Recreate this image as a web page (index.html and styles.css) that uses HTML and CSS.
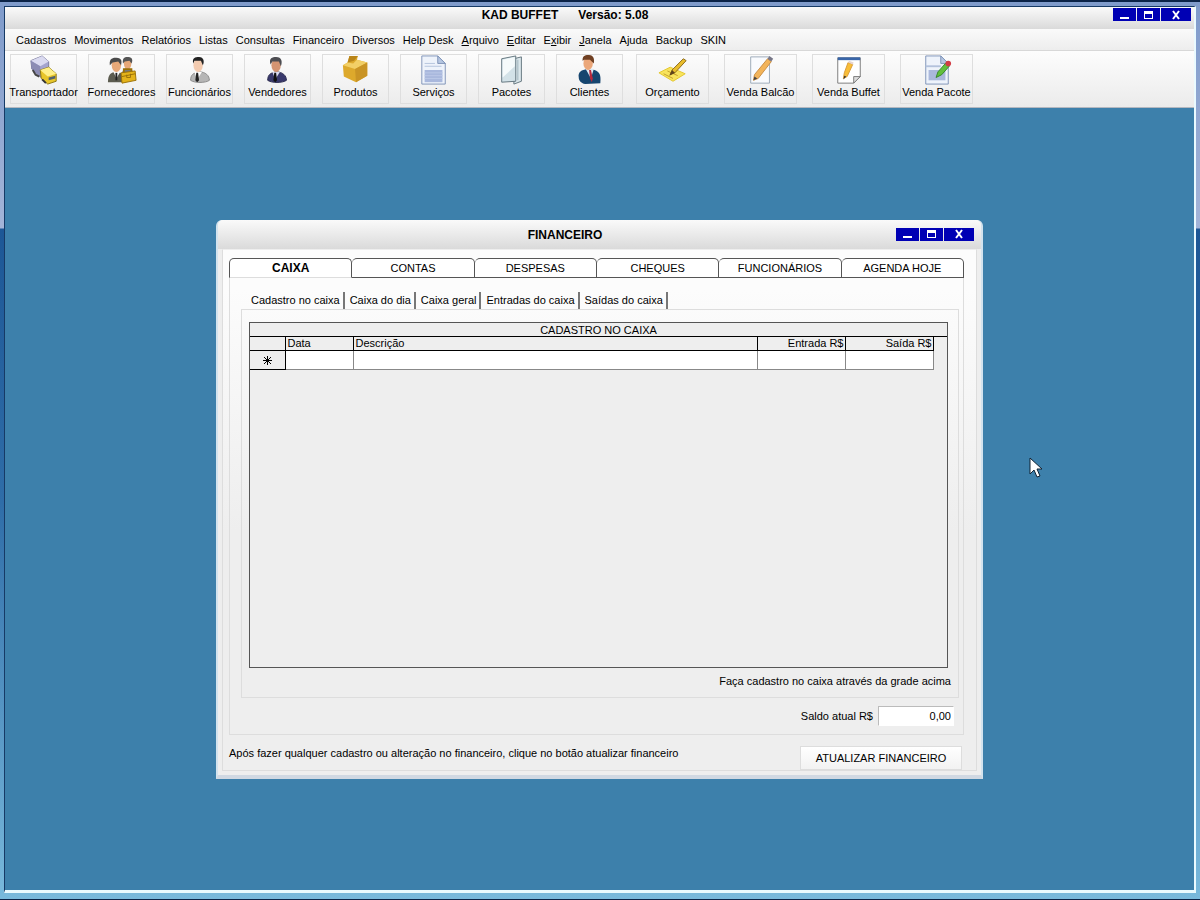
FILE: index.html
```
<!DOCTYPE html>
<html lang="pt-BR">
<head>
    <meta charset="utf-8">
    <title>KAD BUFFET</title>
    <link rel="stylesheet" href="styles.css">
</head>
<body>
    <div class="frame">
        <div class="app">
            <header class="titlebar">
                <h1 class="title"><span>KAD BUFFET</span><span>Versão: 5.08</span></h1>
                <div class="controls">
                    <button type="button" aria-label="Minimizar"><svg width="12" height="12"><path d="M1 9h9" stroke="#fff" stroke-width="2"/></svg></button>
                    <button type="button" aria-label="Maximizar"><svg width="12" height="12"><path d="M1 2h9v8H1z" fill="#fff"/><path d="M2 5h7v4H2z" fill="#0000b4"/></svg></button>
                    <button type="button" class="close" aria-label="Fechar"><svg width="12" height="12"><path d="M3 2l6 8M9 2l-6 8" stroke="#fff" stroke-width="2"/></svg></button>
                </div>
            </header>

            <nav class="menu">
                <a href="#">Cadastros</a>
                <a href="#">Movimentos</a>
                <a href="#">Relatórios</a>
                <a href="#">Listas</a>
                <a href="#">Consultas</a>
                <a href="#">Financeiro</a>
                <a href="#">Diversos</a>
                <a href="#">Help Desk</a>
                <a href="#"><u>A</u>rquivo</a>
                <a href="#"><u>E</u>ditar</a>
                <a href="#">E<u>x</u>ibir</a>
                <a href="#"><u>J</u>anela</a>
                <a href="#">Ajuda</a>
                <a href="#">Backup</a>
                <a href="#">SKIN</a>
            </nav>

            <div class="toolbar">
                <div class="group">
                    <button type="button" class="tool">
                        <svg width="30" height="30" viewBox="0 0 32 32"><path d="M2 6l12-5 7 6v10l-8 7L3 15z" fill="#a4a4ce" stroke="#77779a"/><path d="M2 6l12-5 7 6-9 5z" fill="#dadaf0"/><path d="M2 6l10 6v11L3 15z" fill="#8c8cb4"/><path d="M4 16l3 5 4 2" stroke="#444" stroke-width="2" fill="none"/><path d="M12 16l9-3 8 7v8l-9 3-7-6z" fill="#e8c62a" stroke="#8a7410"/><path d="M12 16l9-3 8 7-9 3z" fill="#fff08a"/><path d="M21 24l7-2v3l-7 2z" fill="#53626b"/><path d="M14 26l4 4" stroke="#333" stroke-width="2"/></svg>
                        Transportador
                    </button>
                    <button type="button" class="tool">
                        <svg width="30" height="30" viewBox="0 0 32 32"><path d="M1 29c0-8 3-11 9-11s8 3 8 11z" fill="#5c5c50"/><path d="M7 18l3 7 4-7z" fill="#fff"/><path d="M10 19v8" stroke="#222" stroke-width="2"/><ellipse cx="10" cy="11" rx="5" ry="7" fill="#e7a878"/><path d="M3 11c-1-8 4-8 7-8 6 0 6 4 5 8l-3-4-6 1z" fill="#4a4a4a"/><path d="M16 21c0-5 2-7 6-7s6 3 7 7z" fill="#777"/><ellipse cx="22" cy="9" rx="4" ry="6" fill="#e7a878"/><path d="M17 9c-1-7 3-7 6-7 4 0 5 4 3 7l-2-3-5 1z" fill="#555"/><path d="M18 18v-3h8v3" fill="none" stroke="#9a7008" stroke-width="2"/><path d="M15 19l15-2 1 10-15 3z" fill="#e4b31a" stroke="#9a7008"/><path d="M16 23l14-3M21 21v3h4v-4" stroke="#9a7008" fill="none"/></svg>
                        Fornecedores
                    </button>
                    <button type="button" class="tool">
                        <svg width="30" height="30" viewBox="0 0 32 32"><path d="M6 27c0-6 3-8 9-9 7 0 11 4 11 9-4 3-16 3-20 0z" fill="#b6b6b6" stroke="#888"/><path d="M10 18l3 8 5-8z" fill="#fff"/><path d="M12 19l2 0 1 8-2 2-2-2z" fill="#222"/><ellipse cx="14" cy="11" rx="5" ry="7" fill="#f3cbb0"/><path d="M9 9c-2-6 2-7 6-7 5 0 6 5 4 9l-2-5-7 0z" fill="#222"/></svg>
                        Funcionários
                    </button>
                    <button type="button" class="tool">
                        <svg width="30" height="30" viewBox="0 0 32 32"><path d="M5 27c0-6 3-8 9-9 7 0 11 4 11 9-4 3-16 3-20 0z" fill="#39396c" stroke="#25254a"/><path d="M10 18l3 8 5-8z" fill="#dcdcf0"/><path d="M12 19l2 0 1 8-2 2-2-2z" fill="#111"/><ellipse cx="14" cy="11" rx="5" ry="7" fill="#d49472"/><path d="M8 10c-2-7 2-8 6-8 6 0 7 5 5 10l-2-5-7 0z" fill="#4d4d52"/></svg>
                        Vendedores
                    </button>
                    <button type="button" class="tool">
                        <svg width="30" height="30" viewBox="0 0 32 32"><path d="M2 11l5-3 2-7 9 0-1 4 11 3v14l-12 7-13-6z" fill="#dda92c"/><path d="M2 11l13 4 13-7-11-3-4 4-6-1z" fill="#f2cf66"/><path d="M15 15l13-7v14l-12 7z" fill="#c99425"/><path d="M9 1l9 0-4 5-7 2z" fill="#b9851a"/></svg>
                        Produtos
                    </button>
                    <button type="button" class="tool">
                        <svg width="30" height="30" viewBox="0 0 32 32"><path d="M3 1h17l8 8v22H3z" fill="#eef3fb" stroke="#7d91b6"/><path d="M20 1v8h8z" fill="#b7c7e2" stroke="#7d91b6"/><path d="M6 9h11M6 12h18" stroke="#b3c2dc"/><path d="M6 16h19v13H6z" fill="#a9b8dd"/><path d="M6 19h19M6 22h19M6 25h19" stroke="#bbc7e6"/></svg>
                        Serviços
                    </button>
                    <button type="button" class="tool">
                        <svg width="30" height="30" viewBox="0 0 32 32"><path d="M18 4l8-2v26l-8 3z" fill="#dce8ec" stroke="#61737c"/><path d="M5 4l15-3v27L5 29z" fill="#d3e2e8" stroke="#61737c"/><path d="M6 5l13-3v10L6 24z" fill="#f5fafb"/><path d="M22 5v22" stroke="#b4c6cd" stroke-width="2"/></svg>
                        Pacotes
                    </button>
                    <button type="button" class="tool">
                        <svg width="30" height="30" viewBox="0 0 32 32"><path d="M4 24c-1-6 3-8 9-9l8 1c5 2 7 5 6 14l-16 1c-5-1-7-4-7-7z" fill="#16456f"/><path d="M11 14l6 11 3-10z" fill="#dceaf5"/><path d="M15 16l2 0 2 9-1 4-2-4z" fill="#b7283c"/><ellipse cx="14" cy="9" rx="5" ry="7" fill="#eba77a"/><path d="M8 6c0-6 4-6 7-6 5 0 6 5 5 9l-4-4-6 0z" fill="#704023"/></svg>
                        Clientes
                    </button>
                </div>
                <div class="group wide">
                    <button type="button" class="tool">
                        <svg width="30" height="30" viewBox="0 0 32 32"><path d="M1 19l12-6 16 7-13 8z" fill="#f8e45d" stroke="#e2c52c"/><path d="M6 20l10 5M10 17l11 5" stroke="#c29d27"/><path d="M13 21l2-5L27 4l3 2-12 13z" fill="#e9bd2c" stroke="#896619"/><path d="M12 22l6-3-3-3z" fill="#5d441c"/></svg>
                        Orçamento
                    </button>
                    <button type="button" class="tool">
                        <svg width="30" height="30" viewBox="0 0 32 32"><path d="M5 2h20v28H5z" fill="#f9fbfe" stroke="#9aa9b8"/><path d="M8 27l1-6L23 4l4 3-14 18z" fill="#f2b45b" stroke="#c78c42"/><path d="M23 4l2-3 4 3-2 3z" fill="#778"/><path d="M8 27l1-4 3 2z" fill="#444"/></svg>
                        Venda Balcão
                    </button>
                    <button type="button" class="tool">
                        <svg width="30" height="30" viewBox="0 0 32 32"><path d="M4 3h24v20l-7 7H4z" fill="#fff" stroke="#777"/><path d="M4 4h24" stroke="#3865a8" stroke-width="3"/><path d="M21 30v-7h7z" fill="#ddd" stroke="#777"/><path d="M10 25l1-6L15 8l5 2-6 13z" fill="#f8bd38" stroke="#d89a38"/><path d="M10 26l1-4 2 1z" fill="#333"/><path d="M15 8l1-2 5 2-1 2z" fill="#e7d5d0"/></svg>
                        Venda Buffet
                    </button>
                    <button type="button" class="tool">
                        <svg width="30" height="30" viewBox="0 0 32 32"><path d="M4 1h16l8 8v22H4z" fill="#eef3fb" stroke="#7d91b6"/><path d="M20 1v8h8z" fill="#b7c7e2" stroke="#7d91b6"/><path d="M4 12h16" stroke="#b3c2dc" stroke-width="2"/><path d="M7 16h18v11H7z" fill="#aab8dc"/><path d="M15 24l2-6 8-9 4 3-8 9z" fill="#62bf3d" stroke="#34852a"/><circle cx="28" cy="9" r="3" fill="#d13c45"/></svg>
                        Venda Pacote
                    </button>
                </div>
            </div>

            <main class="desktop">
                <section class="dialog">
                    <header class="dialog-title">
                        <h2 class="title">FINANCEIRO</h2>
                        <div class="controls">
                            <button type="button" aria-label="Minimizar"><svg width="12" height="12"><path d="M1 9h9" stroke="#fff" stroke-width="2"/></svg></button>
                            <button type="button" aria-label="Maximizar"><svg width="12" height="12"><path d="M1 2h9v8H1z" fill="#fff"/><path d="M2 5h7v4H2z" fill="#0000b4"/></svg></button>
                            <button type="button" class="close" aria-label="Fechar"><svg width="12" height="12"><path d="M3 2l6 8M9 2l-6 8" stroke="#fff" stroke-width="2"/></svg></button>
                        </div>
                    </header>
                    <div class="dialog-body">
                        <div class="tabs" role="tablist">
                            <button type="button" class="tab active" role="tab" aria-selected="true">CAIXA</button>
                            <button type="button" class="tab" role="tab">CONTAS</button>
                            <button type="button" class="tab" role="tab">DESPESAS</button>
                            <button type="button" class="tab" role="tab">CHEQUES</button>
                            <button type="button" class="tab" role="tab">FUNCIONÁRIOS</button>
                            <button type="button" class="tab" role="tab">AGENDA HOJE</button>
                        </div>
                        <div class="page">
                            <div class="subtabs" role="tablist">
                                <button type="button" class="subtab" role="tab" aria-selected="true">Cadastro no caixa</button>
                                <button type="button" class="subtab" role="tab">Caixa do dia</button>
                                <button type="button" class="subtab" role="tab">Caixa geral</button>
                                <button type="button" class="subtab" role="tab">Entradas do caixa</button>
                                <button type="button" class="subtab" role="tab">Saídas do caixa</button>
                            </div>
                            <div class="subpage">
                                <div class="grid">
                                    <table>
                                        <caption>CADASTRO NO CAIXA</caption>
                                        <thead>
                                            <tr>
                                                <th class="col-mark"></th>
                                                <th class="col-date">Data</th>
                                                <th>Descrição</th>
                                                <th class="col-money">Entrada R$</th>
                                                <th class="col-money">Saída R$</th>
                                                <th class="col-end"></th>
                                            </tr>
                                        </thead>
                                        <tbody>
                                            <tr>
                                                <th><svg width="11" height="11"><path d="M5.500 1v9M1 5.500h9M2 2l7 7M9 2l-7 7" stroke="#000"/></svg></th>
                                                <td></td>
                                                <td></td>
                                                <td></td>
                                                <td></td>
                                                <td class="col-end"></td>
                                            </tr>
                                        </tbody>
                                    </table>
                                </div>
                                <p class="hint">Faça cadastro no caixa através da grade acima</p>
                            </div>
                            <div class="balance">
                                <label for="saldo">Saldo atual R$</label>
                                <input type="text" id="saldo" value="0,00">
                            </div>
                        </div>
                        <footer class="dialog-footer">
                            <p>Após fazer qualquer cadastro ou alteração no financeiro, clique no botão atualizar financeiro</p>
                            <button type="button" class="update">ATUALIZAR FINANCEIRO</button>
                        </footer>
                    </div>
                </section>
            </main>
        </div>
    </div>
    <svg class="cursor" width="14" height="22"><path d="M1 1v16l4-4 3 7 3-1-3-7h5z" fill="#fff" stroke="#123"/></svg>
</body>
</html>
```
FILE: styles.css
```
* {
    box-sizing: border-box;
}
body {
    margin: 0;
    font-family: "Liberation Sans", Arial, sans-serif;
    font-size: 11px;
    line-height: 14px;
    color: #000;
}
h1, h2, p {
    margin: 0;
}
button, input {
    font: inherit;
    color: inherit;
    margin: 0;
    padding: 0;
}
.frame {
    display: flex;
    min-height: 100vh;
    padding: 4px 4px 6px;
    border-top: 2px solid #0b2347;
    border-bottom: 1px solid #0b2347;
    background: linear-gradient(to bottom, #7f9bcb 0, #a3b4d8 226px, #1d5796 227px, #2f6da8 500px, #79b9dc 100%);
}
.app {
    flex: 1;
    display: flex;
    flex-direction: column;
    border: 1px solid #163a66;
    border-right: 2px solid #eafaff;
    border-bottom: 3px solid #eafaff;
}
.titlebar, .dialog-title {
    display: flex;
    align-items: flex-start;
    background: linear-gradient(to bottom, #fafafa, #dadada);
}
.titlebar {
    height: 22px;
    padding: 1px 3px 0 12px;
}
.title {
    flex: 1;
    display: flex;
    justify-content: center;
    gap: 20px;
    font-size: 12px;
    font-weight: bold;
}
.controls {
    display: flex;
    gap: 1px;
}
.controls button {
    display: flex;
    align-items: center;
    justify-content: center;
    width: 23px;
    height: 13px;
    border: 0;
    background: #0000b4;
}
.controls .close {
    width: 30px;
}

.menu {
    display: flex;
    gap: 8px;
    padding: 4px 11px 3px;
    background: linear-gradient(to bottom, #fafafa, #ededed);
    border-bottom: 1px solid #d8d8d8;
}
.menu a {
    color: #000;
    text-decoration: none;
}
.toolbar {
    display: flex;
    gap: 13px;
    padding: 3px 5px;
    background: linear-gradient(to bottom, #fdfdfd, #ebebeb);
    border-bottom: 1px solid #b4b8c0;
}
.group {
    display: flex;
    gap: 11px;
}
.group.wide {
    gap: 15px;
}
.tool {
    display: flex;
    flex-direction: column;
    align-items: center;
    width: 67px;
    height: 50px;
    border: 1px solid #dedede;
    background: none;
    white-space: nowrap;
}
.wide .tool {
    width: 73px;
}
.tool svg {
    flex: none;
}

.desktop {
    flex: 1;
    display: flex;
    align-items: center;
    justify-content: center;
    background: #3d80ab;
}
.dialog {
    width: 767px;
    max-width: 100%;
    border: 2px solid #d3e3ee;
    border-top: 0;
    border-bottom: 4px solid #d0d8e2;
    border-radius: 6px 6px 0 0;
    background: #eee;
}
.dialog-title {
    height: 29px;
    padding: 8px 7px 0 16px;
    border-radius: 5px 5px 0 0;
}
.dialog-body {
    margin: 0 4px 4px;
    padding: 8px 12px 0 6px;
    border: 1px solid #ddd;
    border-top-color: #eee;
    background: linear-gradient(to bottom, #fcfcfc, #fcfcfc 40px, #eee 280px);
}
.tabs {
    display: flex;
}
.tab {
    flex: 1;
    height: 20px;
    border: 1px solid #555;
    border-left-width: 0;
    border-radius: 5px 5px 0 0;
    background: #fff;
}
.tab.active {
    border-left-width: 1px;
    border-bottom-color: #ddd;
    font-size: 12px;
    font-weight: bold;
}
.page {
    padding: 14px 4px 8px 11px;
    border: 1px solid #ddd;
    border-top: 0;
}
.subtabs {
    display: flex;
    padding-left: 5px;
}
.subtab {
    height: 17px;
    padding: 0 3px 0 5px;
    border: 0;
    border-right: 2px solid #777;
    background: none;
}
.subpage {
    padding: 12px 10px 9px 7px;
    border: 1px solid #ddd;
}
.grid {
    min-height: 346px;
    border: 1px solid #555;
    background: #eee;
}
.grid table {
    width: 100%;
    table-layout: fixed;
    border-collapse: collapse;
}
.grid caption {
    height: 14px;
    border-bottom: 1px solid #000;
}
.grid th, .grid td {
    height: 19px;
    padding: 0 2px;
    border: 1px solid #888;
    border-top: 0;
    background: #fff;
    font-weight: normal;
    text-align: left;
    line-height: 12px;
}
.grid thead th {
    height: 14px;
    border-color: #000;
    background: #eee;
}
.grid tbody th {
    border-color: #000;
    background: #eee;
    text-align: center;
}
.grid tr > :first-child {
    border-left: 0;
}
.grid .col-mark {
    width: 35px;
}
.grid .col-date {
    width: 68px;
}
.grid tr .col-money {
    width: 88px;
    padding: 0 1px;
    text-align: right;
}
.grid tr .col-end {
    width: 14px;
    border-right: 0;
    border-bottom: 0;
    background: #eee;
}
.grid svg {
    display: block;
    margin: 0 auto;
}
.hint {
    padding-top: 6px;
    margin-right: -3px;
    text-align: right;
}
.balance {
    display: flex;
    align-items: center;
    justify-content: flex-end;
    gap: 5px;
    padding: 8px 5px 0;
}
.balance input {
    width: 76px;
    height: 20px;
    padding-right: 2px;
    border: 1px solid #fff;
    border-top-color: #bbb;
    border-left-color: #bbb;
    background: #fff;
    text-align: right;
}
.dialog-footer {
    display: flex;
    align-items: flex-start;
    justify-content: space-between;
    padding: 11px 2px 0 0;
}
.update {
    width: 162px;
    height: 24px;
    border: 1px solid #ddd;
    background: linear-gradient(to bottom, #fff, #f2f2f2);
}
.cursor {
    position: absolute;
    left: 1029px;
    top: 457px;
}
```
